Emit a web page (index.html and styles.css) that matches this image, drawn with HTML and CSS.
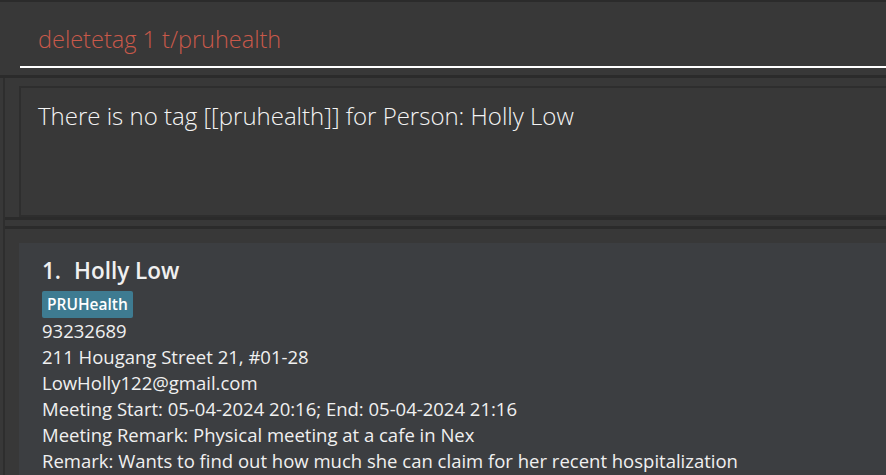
FILE: index.html
```html
<!DOCTYPE html>
<html>
<head>
<meta charset="utf-8">
<link rel="stylesheet" href="styles.css">
</head>
<body>
<div class="app">
  <div class="command-pane">
    <div class="command-box">
      <div class="command-text">deletetag 1 t/pruhealth</div>
    </div>
  </div>
  <div class="main">
    <div class="result-pane">
      <div class="result-box">There is no tag [[pruhealth]] for Person: Holly Low</div>
    </div>
    <div class="list-pane">
      <div class="card">
        <div class="name"><span class="index">1.</span>Holly Low</div>
        <div class="tags"><span class="tag">PRUHealth</span></div>
        <div class="field">93232689</div>
        <div class="field">211 Hougang Street 21, #01-28</div>
        <div class="field">LowHolly122@gmail.com</div>
        <div class="field">Meeting Start: 05-04-2024 20:16; End: 05-04-2024 21:16</div>
        <div class="field">Meeting Remark: Physical meeting at a cafe in Nex</div>
        <div class="field">Remark: Wants to find out how much she can claim for her recent hospitalization</div>
      </div>
    </div>
  </div>
</div>
</body>
</html>
```
FILE: styles.css
```css
html, body {
  margin: 0;
  padding: 0;
  background: #383838;
  overflow: hidden;
}
body {
  font-family: "Open Sans", "Noto Sans", sans-serif;
  color: #ffffff;
}
.app {
  width: 886px;
  height: 475px;
  border-top: 2px solid #2b2b2b;
  box-sizing: border-box;
}
.command-pane {
  height: 76px;
  padding: 0 0 0 20px;
  box-sizing: border-box;
  border-bottom: 3px solid #2b2b2b;
}
.command-box {
  height: 66px;
  border-bottom: 2px solid #ffffff;
  box-sizing: border-box;
  padding: 23px 0 0 18px;
}
.command-text {
  color: #c9594a;
  font-size: 23.5px;
  line-height: 28px;
  font-weight: 300;
}
.main {
  border-left: 2px solid #2e2e2e;
  margin-left: 3px;
}
.result-pane {
  padding: 8px 0 0 14px;
  height: 142px;
  box-sizing: border-box;
  border-bottom: 3px solid #2b2b2b;
}
.result-box {
  height: 131px;
  box-sizing: border-box;
  border: 2px solid #2e2e2e;
  border-right: none;
  padding: 13px 0 0 17px;
  font-size: 24px;
  line-height: 30px;
  font-weight: 300;
  color: #f4f4f4;
}
.list-pane {
  margin-top: 6px;
  border-top: 3px solid #2b2b2b;
  padding: 14px 0 0 14px;
}
.card {
  background: #3c3e41;
  padding: 14px 0 0 23px;
  height: 240px;
}
.name {
  font-size: 22.5px;
  font-weight: 600;
  line-height: 28px;
  color: #f0f0f0;
}
.index {
  margin-right: 13px;
}
.tags {
  margin-top: 6px;
  display: flex;
}
.tag {
  background: #3e7b91;
  color: #ffffff;
  font-size: 15.5px;
  font-weight: 600;
  line-height: 27px;
  padding: 0 5px;
  border-radius: 2px;
}
.field {
  font-size: 18.5px;
  line-height: 26px;
  color: #f0f0f0;
}
```
